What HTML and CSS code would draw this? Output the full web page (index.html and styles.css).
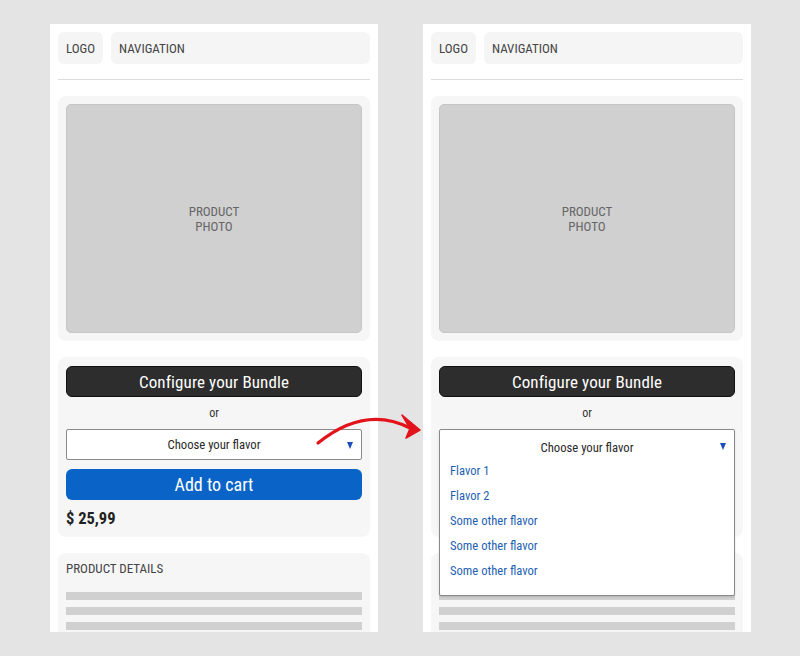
FILE: index.html
```html
<!DOCTYPE html>
<html>
<head>
<meta charset="utf-8">
<link rel="stylesheet" href="styles.css">
</head>
<body>
<div class="stage">
  <div class="phone">
    <div class="header">
      <div class="box logo">LOGO</div>
      <div class="box nav">NAVIGATION</div>
    </div>
    <hr class="divider">
    <div class="card photo-card">
      <div class="photo">PRODUCT<br>PHOTO</div>
    </div>
    <div class="card buy-card">
      <div class="configure">Configure your Bundle</div>
      <div class="or">or</div>
      <div class="select-wrap">
        <div class="select">Choose your flavor<span class="tri"></span></div>
      </div>
      <div class="add">Add to cart</div>
      <div class="price">$ 25,99</div>
    </div>
    <div class="card details">
      <div class="details-title">PRODUCT DETAILS</div>
      <div class="bar"></div>
      <div class="bar"></div>
      <div class="bar"></div>
      <div class="bar"></div>
    </div>
  </div>

  <div class="phone is-open">
    <div class="header">
      <div class="box logo">LOGO</div>
      <div class="box nav">NAVIGATION</div>
    </div>
    <hr class="divider">
    <div class="card photo-card">
      <div class="photo">PRODUCT<br>PHOTO</div>
    </div>
    <div class="card buy-card">
      <div class="configure">Configure your Bundle</div>
      <div class="or">or</div>
      <div class="select-wrap">
        <div class="select covered">Choose your flavor<span class="tri"></span></div>
        <div class="dropdown">
          <div class="dd-head">Choose your flavor<span class="tri"></span></div>
          <div class="dd-item">Flavor 1</div>
          <div class="dd-item">Flavor 2</div>
          <div class="dd-item">Some other flavor</div>
          <div class="dd-item">Some other flavor</div>
          <div class="dd-item">Some other flavor</div>
        </div>
      </div>
      <div class="add covered">Add to cart</div>
      <div class="price covered">$ 25,99</div>
    </div>
    <div class="card details">
      <div class="details-title covered">PRODUCT DETAILS</div>
      <div class="bar"></div>
      <div class="bar"></div>
      <div class="bar"></div>
      <div class="bar"></div>
    </div>
  </div>

  <svg class="arrow" width="800" height="656" viewBox="0 0 800 656">
    <path d="M318 443 Q365 405 410 428" fill="none" stroke="#e3131c" stroke-width="3.2" stroke-linecap="round"/>
    <polygon points="420,430 402,415 410,428.5 406,438" fill="#e3131c" stroke="#e3131c" stroke-width="1.5" stroke-linejoin="round"/>
  </svg>
</div>
</body>
</html>
```

FILE: styles.css
```css
html, body {
  margin: 0;
  padding: 0;
}
body {
  background: #e4e4e4;
  font-family: "Roboto Condensed", Roboto, "Liberation Sans", sans-serif;
  color: #333;
  width: 800px;
  height: 656px;
  overflow: hidden;
}
.stage {
  position: relative;
  display: flex;
  gap: 45px;
  padding: 24px 0 0 50px;
}
.phone {
  width: 328px;
  height: 608px;
  box-sizing: border-box;
  background: #fff;
  padding: 8px;
  overflow: hidden;
}
.header {
  display: flex;
  gap: 8px;
  height: 32px;
}
.box {
  background: #f5f5f5;
  border-radius: 6px;
  display: flex;
  align-items: center;
  font-size: 13px;
  color: #444;
  padding: 0 8px;
}
.logo {
  width: 45px;
  box-sizing: border-box;
  justify-content: center;
}
.nav {
  flex: 1;
}
.divider {
  border: 0;
  border-top: 1px solid #dcdcdc;
  margin: 15px 0 16px;
  height: 0;
}
.card {
  background: #f6f6f6;
  border-radius: 8px;
  padding: 8px;
}
.photo {
  height: 229px;
  box-sizing: border-box;
  background: #d0d0d0;
  border: 1px solid #c6c6c6;
  border-radius: 5px;
  display: flex;
  align-items: center;
  justify-content: center;
  text-align: center;
  font-size: 13px;
  line-height: 15px;
  color: #666;
}
.buy-card {
  margin-top: 16px;
  padding-top: 9px;
}
.configure {
  height: 31px;
  box-sizing: border-box;
  background: #2d2d2d;
  border: 1px solid #111;
  border-radius: 6px;
  color: #fff;
  font-size: 17px;
  letter-spacing: 0.1px;
  display: flex;
  align-items: center;
  justify-content: center;
}
.or {
  height: 32px;
  display: flex;
  align-items: center;
  justify-content: center;
  font-size: 12px;
  color: #333;
}
.select-wrap {
  position: relative;
}
.select {
  position: relative;
  height: 31px;
  box-sizing: border-box;
  background: #fff;
  border: 1px solid #8a8a8a;
  border-radius: 2px;
  display: flex;
  align-items: center;
  justify-content: center;
  font-size: 12.7px;
  color: #2a2a2a;
}
.tri {
  position: absolute;
  right: 8px;
  top: 12px;
  width: 0;
  height: 0;
  border-left: 3.5px solid transparent;
  border-right: 3.5px solid transparent;
  border-top: 7px solid #1b4fbf;
}
.dropdown {
  position: absolute;
  top: 0;
  left: 0;
  right: 0;
  z-index: 2;
  background: #fff;
  border: 1px solid #8a8a8a;
  border-radius: 2px;
  padding: 7px 0 12px;
  box-shadow: 0 1px 2px rgba(0,0,0,0.15);
}
.dd-head {
  position: relative;
  height: 21px;
  display: flex;
  align-items: center;
  justify-content: center;
  font-size: 12.7px;
  color: #2a2a2a;
}
.dd-head .tri {
  top: 6px;
}
.dd-item {
  height: 25px;
  display: flex;
  align-items: center;
  padding-left: 10px;
  font-size: 12.6px;
  color: #1f5fb3;
}
.add {
  margin-top: 9px;
  height: 31px;
  background: #0a64c8;
  border-radius: 6px;
  color: #fff;
  font-size: 18px;
  display: flex;
  align-items: center;
  justify-content: center;
}
.price {
  margin-top: 9px;
  height: 20px;
  line-height: 20px;
  font-size: 16.5px;
  font-weight: bold;
  color: #222;
}
.details {
  margin-top: 16px;
}
.details-title {
  font-size: 13px;
  line-height: 16px;
  color: #444;
  margin-bottom: 15px;
}
.bar {
  height: 8px;
  background: #d0d0d0;
  margin-bottom: 7px;
}
.is-open .covered {
  visibility: hidden;
}
.arrow {
  position: absolute;
  left: 0;
  top: 0;
  pointer-events: none;
  z-index: 5;
}
```
